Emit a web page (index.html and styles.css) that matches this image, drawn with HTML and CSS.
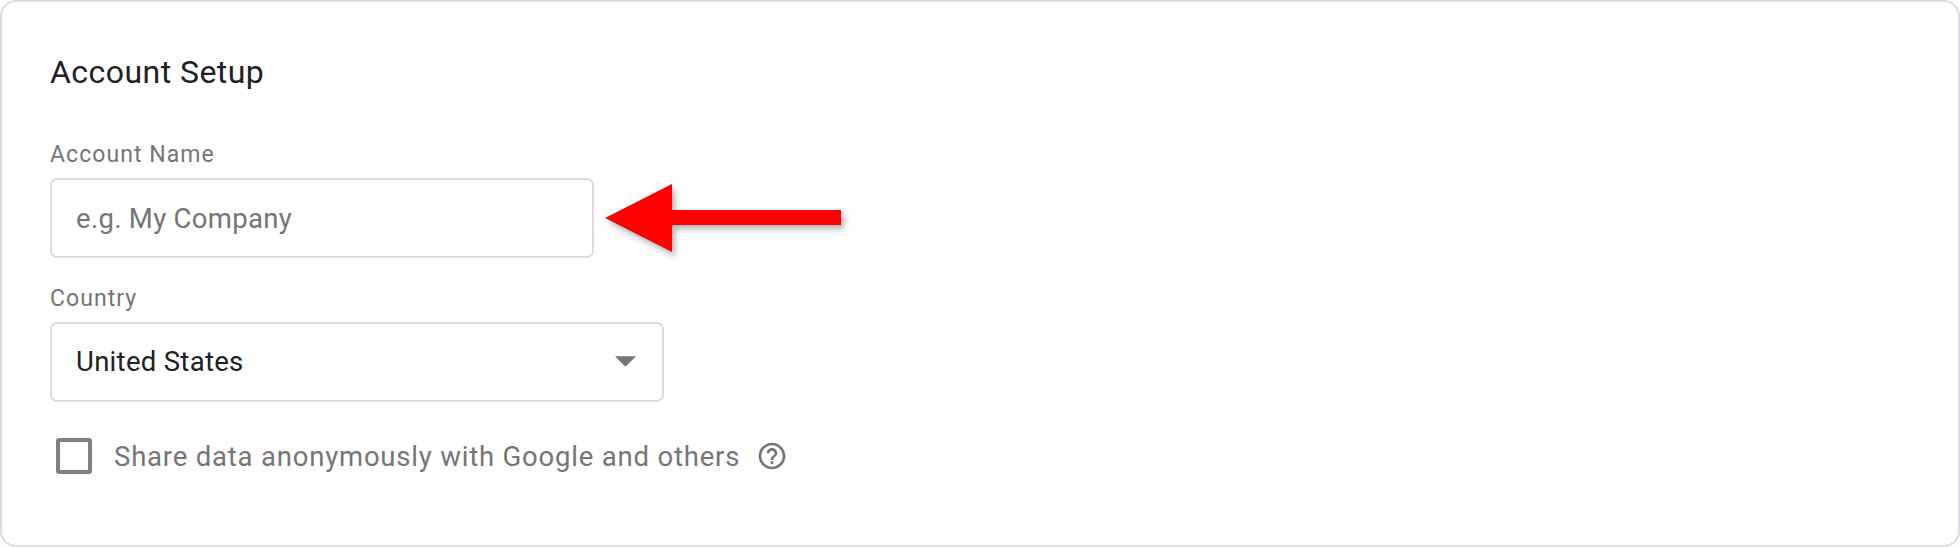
FILE: index.html
```html
<!DOCTYPE html>
<html lang="en">
  <head>
    <meta charset="UTF-8" />
    <title>Account Setup</title>
    <link rel="stylesheet" href="styles.css">
  </head>
  <body>
    <div class="card">
      <h2 class="title">Account Setup</h2>

      <label class="label" for="accountName">Account Name</label>
      <input class="field field-name" id="accountName" type="text" placeholder="e.g. My Company">

      <div class="label label-country">Country</div>
      <div class="field field-country">
        <span>United States</span>
        <svg class="caret" viewBox="7 10 10 5"><path d="M7 10l5 5 5-5z" /></svg>
      </div>

      <div class="share">
        <span class="checkbox"></span>
        <span class="share-text">Share data anonymously with Google and others</span>
        <svg class="help" viewBox="0 0 24 24">
          <path d="M11 18h2v-2h-2v2zm1-16C6.48 2 2 6.48 2 12s4.48 10 10 10 10-4.48 10-10S17.52 2 12 2zm0 18c-4.41 0-8-3.59-8-8s3.59-8 8-8 8 3.59 8 8-3.59 8-8 8zm0-14c-2.21 0-4 1.79-4 4h2c0-1.1.9-2 2-2s2 .9 2 2c0 2-3 1.75-3 5h2c0-2.25 3-2.5 3-5 0-2.21-1.79-4-4-4z" />
        </svg>
      </div>

      <!-- red callout arrow on top of the form -->
      <svg class="callout" viewBox="0 0 260 90">
        <path d="M5 39L72 5V31H241V46H72V73z" />
      </svg>
    </div>
  </body>
</html>
```

FILE: styles.css
```css
body {
  margin: 0;
  background-color: white;
  font-family: Roboto, "Liberation Sans", sans-serif;
}

.card {
  position: relative;
  box-sizing: border-box;
  width: 1960px;
  height: 547px;
  padding: 49px 48px 0;
  border: 2px solid #dadce0;
  border-radius: 16px;
}

.title {
  margin: 0 0 48px;
  font-size: 32px;
  line-height: 42px;
  font-weight: 400;
  letter-spacing: 0.45px;
  color: #202124;
}

.label {
  display: block;
  height: 37px;
  font-size: 23px;
  line-height: 28px;
  letter-spacing: 1.05px;
  color: #757575;
}

.label-country {
  margin-top: 27px;
}

.field {
  box-sizing: border-box;
  display: flex;
  align-items: center;
  justify-content: space-between;
  height: 80px;
  padding: 0 26px 0 24px;
  border: 2px solid #dadce0;
  border-radius: 7px;
  font-family: inherit;
  font-size: 27.5px;
  letter-spacing: 0.3px;
  color: #202124;
}

.field-name {
  width: 544px;
  outline: none;
}

.field-name::placeholder {
  color: #757575;
  opacity: 1;
}

.field-country {
  width: 614px;
  padding-bottom: 2px;
}

.caret {
  width: 21px;
  height: 11px;
  fill: #757575;
}

.share {
  display: flex;
  align-items: center;
  margin: 36px 0 0 6px;
}

.checkbox {
  box-sizing: border-box;
  width: 36px;
  height: 36px;
  border: 4px solid #808080;
  border-radius: 3px;
}

.share-text {
  margin-left: 22px;
  font-size: 27.5px;
  letter-spacing: 0.8px;
  color: #757575;
}

.help {
  width: 32px;
  height: 32px;
  margin-left: 16px;
  fill: #757575;
}

.callout {
  position: absolute;
  left: 598px;
  top: 177px;
  width: 260px;
  height: 90px;
  fill: #ff0000;
  filter: drop-shadow(3px 4px 3px rgba(0, 0, 0, 0.3));
}
```
